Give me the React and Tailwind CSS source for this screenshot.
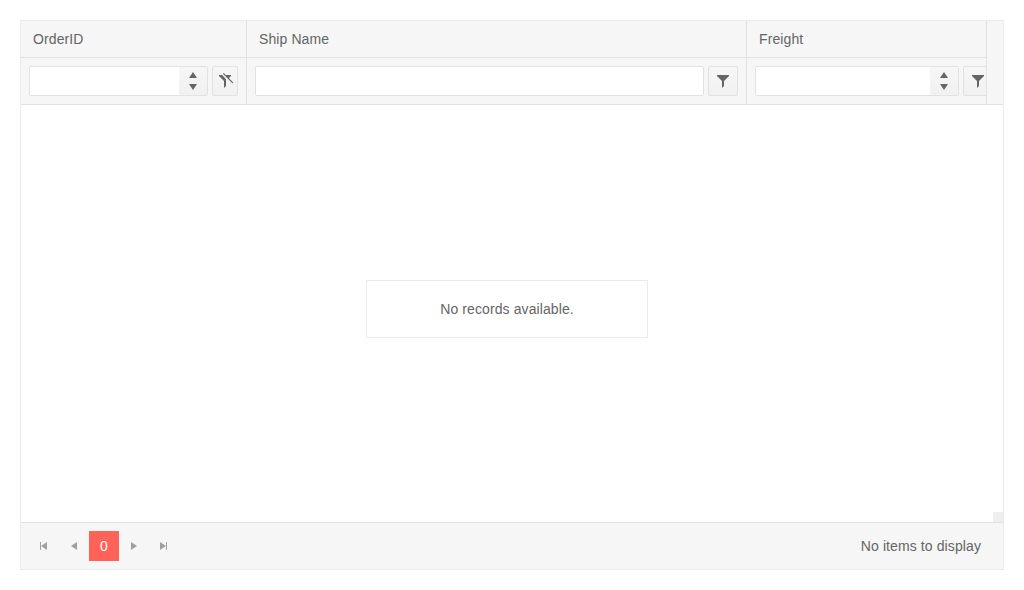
import React from "react";

function FilterIcon() {
  return (
    <svg width="16" height="16" viewBox="0 0 16 16" className="shrink-0 fill-[#656565]">
      <path d="M2 2h12v1L9 8v5l-2 2V8L2 3z" />
    </svg>
  );
}

function ClearFilterIcon() {
  return (
    <svg width="16" height="16" viewBox="0 0 16 16" className="shrink-0 fill-[#656565]">
      <path d="M2 2h3.2L9 6.2V13l-2 2V8L2 3z" />
      <path d="M8.4 2H14v1l-2.4 2.4z" />
      <path d="M6.3 0.3l9.5 9.6" strokeWidth="1.1" className="fill-none stroke-[#656565]" />
    </svg>
  );
}

function NumericInput() {
  return (
    <div className="flex h-[30px] min-w-0 flex-1 overflow-hidden rounded-[2px] border border-[#e2e2e2] bg-white">
      <input aria-label="Filter value" className="min-w-0 flex-1 bg-white outline-none" />
      <div className="flex w-7 shrink-0 flex-col items-center justify-between bg-linear-to-b from-[#f6f6f6] to-[#f1f1f1] py-[5px]">
        <svg width="8" height="6" viewBox="0 0 8 6" className="fill-[#656565]"><path d="M0 6L4 0l4 6z" /></svg>
        <svg width="8" height="6" viewBox="0 0 8 6" className="fill-[#656565]"><path d="M0 0h8L4 6z" /></svg>
      </div>
    </div>
  );
}

function FilterButton({ clear }) {
  return (
    <button
      className={`flex h-[30px] shrink-0 items-center justify-center rounded-[2px] border border-[#e2e2e2] bg-linear-to-b from-[#f6f6f6] to-[#f1f1f1] ${clear ? "w-[26px]" : "w-[30px]"}`}
    >
      {clear ? <ClearFilterIcon /> : <FilterIcon />}
    </button>
  );
}

function Column({ title, className, children }) {
  return (
    <div className={`shrink-0 ${className}`}>
      <div className="h-[37px] border-b border-[#e2e2e2] px-3 pt-2 leading-5">{title}</div>
      <div className="flex h-[46px] gap-1 p-2">{children}</div>
    </div>
  );
}

function PagerButton({ d }) {
  return (
    <button className="flex size-[30px] items-center justify-center">
      <svg width="16" height="16" viewBox="0 0 16 16" className="fill-[#a0a0a0]"><path d={d} /></svg>
    </button>
  );
}

export default function App() {
  return (
    <div className="h-[590px] bg-white p-5 font-['Liberation_Sans',sans-serif] text-[14px] tracking-[0.1px] text-[#656565]">
      <div className="flex h-[550px] w-[984px] flex-col border border-[#ebebeb]">
        <div className="flex h-[84px] shrink-0 border-b border-[#e2e2e2] bg-[#f6f6f6]">
          <div className="flex w-[966px] shrink-0 overflow-hidden border-r border-[#e2e2e2]">
            <Column title="OrderID" className="w-[226px] border-r border-[#e2e2e2]">
              <NumericInput />
              <FilterButton clear />
            </Column>
            <Column title="Ship Name" className="w-[500px] border-r border-[#e2e2e2]">
              <input
                aria-label="Ship name filter"
                className="h-[30px] min-w-0 flex-1 rounded-[2px] border border-[#e2e2e2] bg-white outline-none"
              />
              <FilterButton />
            </Column>
            <Column title="Freight" className="w-[254px]">
              <NumericInput />
              <FilterButton />
            </Column>
          </div>
        </div>
        <div className="relative flex flex-1 items-start justify-center pt-[175px] pr-[10px]">
          <div className="flex h-[58px] w-[282px] items-center justify-center border border-[#ebebeb]">
            No records available.
          </div>
          <div className="absolute right-0 bottom-0 size-[10px] bg-[#efefef]" />
        </div>
        <div className="flex h-[47px] shrink-0 items-center justify-between border-t border-[#e2e2e2] bg-[#f6f6f6] pr-[22px] pl-2">
          <div className="flex">
            <PagerButton d="M4 4h1v8H4zM5 8l6-4v8z" />
            <PagerButton d="M5 8l6-4v8z" />
            <button className="flex size-[30px] items-center justify-center bg-[#ff6358] text-white">0</button>
            <PagerButton d="M5 4l6 4-6 4z" />
            <PagerButton d="M4 4l6 4-6 4zM10 4h1v8h-1z" />
          </div>
          <span>No items to display</span>
        </div>
      </div>
    </div>
  );
}
